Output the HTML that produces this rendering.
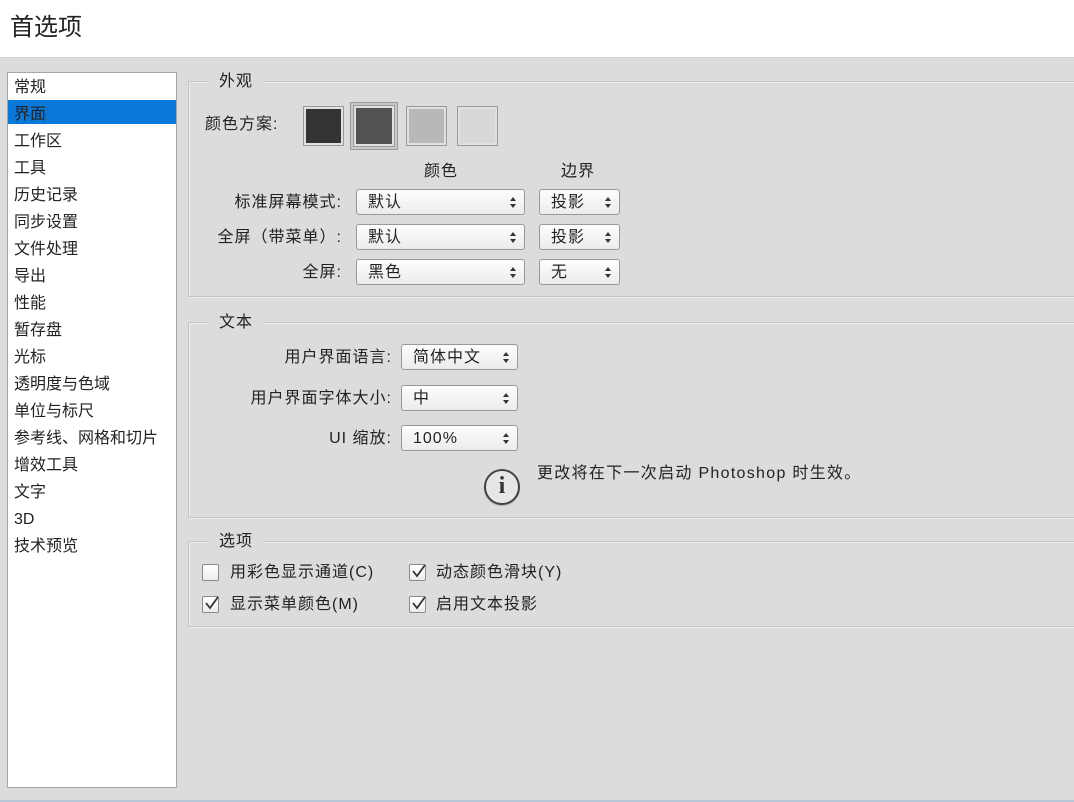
<!DOCTYPE html>
<html><head><meta charset="utf-8"><style>
*{margin:0;padding:0;box-sizing:border-box}
body{width:1074px;height:802px;background:#dcdcdc;position:relative;overflow:hidden;font-family:"Liberation Sans","Noto Sans CJK SC",sans-serif;color:#222}
.a{position:absolute;white-space:nowrap}
#hdr{left:0;top:0;width:1074px;height:58px;background:#fff;border-bottom:1px solid #d0d0d0}
#list{left:7px;top:72px;width:170px;height:716px;background:#fff;border:1px solid #a8a8a8}
.li{position:absolute;left:6px;font-size:16px;line-height:20px;top:1px}
.grp{position:absolute;border:1px solid #c4c4c4;box-shadow:inset 1px 1px 0 #ececec,1px 1px 0 #ececec}
.gt{position:absolute;background:#dcdcdc;padding:0 10px;font-size:16px;line-height:20px}
.sw{position:absolute;border:1px solid #9a9a9a;box-shadow:inset 0 0 0 2px #e0e0e0}
.dd{position:absolute;height:26px;border:1px solid #999;border-radius:3px;background:linear-gradient(#fdfdfd,#ececec);font-size:16px;line-height:26px;padding-left:11px;letter-spacing:1px}
.dd:after{content:"";position:absolute;right:8px;top:7px;width:0;height:0;border-left:3.5px solid transparent;border-right:3.5px solid transparent;border-bottom:4px solid #333}
.dd:before{content:"";position:absolute;right:8px;top:14px;width:0;height:0;border-left:3.5px solid transparent;border-right:3.5px solid transparent;border-top:4px solid #333}
.lb{position:absolute;font-size:16px;line-height:20px;text-align:right;letter-spacing:1px}
.cb{position:absolute;width:17px;height:17px;border:1px solid #8a8a8a;background:linear-gradient(#fff,#ececec);border-radius:2px}
</style></head><body>
<div class="a" id="hdr"></div>
<div class="a" style="left:10px;top:13px;font-size:24px;line-height:30px;color:#222">首选项</div>
<div class="a" id="list">
<div style="position:absolute;left:0;top:27px;width:168px;height:24px;background:#0a78d8"></div>
<div class="li" style="top:5px">常规</div>
<div class="li" style="top:32px">界面</div>
<div class="li" style="top:59px">工作区</div>
<div class="li" style="top:86px">工具</div>
<div class="li" style="top:113px">历史记录</div>
<div class="li" style="top:140px">同步设置</div>
<div class="li" style="top:167px">文件处理</div>
<div class="li" style="top:194px">导出</div>
<div class="li" style="top:221px">性能</div>
<div class="li" style="top:248px">暂存盘</div>
<div class="li" style="top:275px">光标</div>
<div class="li" style="top:302px">透明度与色域</div>
<div class="li" style="top:329px">单位与标尺</div>
<div class="li" style="top:356px">参考线、网格和切片</div>
<div class="li" style="top:383px">增效工具</div>
<div class="li" style="top:410px">文字</div>
<div class="li" style="top:437px">3D</div>
<div class="li" style="top:464px">技术预览</div>
</div>

<div class="grp" style="left:188px;top:81px;width:890px;height:216px"></div>
<div class="gt" style="left:209px;top:72px;letter-spacing:1px">外观</div>
<div class="lb" style="left:205px;top:115px">颜色方案:</div>
<div class="sw" style="left:303px;top:106px;width:41px;height:40px;background:#333"></div>
<div style="position:absolute;left:350px;top:102px;width:48px;height:48px;border:1px solid #999;background:#c8c8c8"></div>
<div class="sw" style="left:353px;top:105px;width:42px;height:42px;background:#535353"></div>
<div class="sw" style="left:406px;top:106px;width:41px;height:40px;background:#b8b8b8"></div>
<div class="sw" style="left:457px;top:106px;width:41px;height:40px;background:#d8d8d8"></div>
<div class="lb" style="left:424px;top:162px">颜色</div>
<div class="lb" style="left:561px;top:162px">边界</div>
<div class="lb" style="left:180px;width:162px;top:193px">标准屏幕模式:</div>
<div class="lb" style="left:180px;width:162px;top:228px">全屏（带菜单）:</div>
<div class="lb" style="left:180px;width:162px;top:263px">全屏:</div>
<div class="dd" style="left:356px;top:189px;width:169px">默认</div>
<div class="dd" style="left:356px;top:224px;width:169px">默认</div>
<div class="dd" style="left:356px;top:259px;width:169px">黑色</div>
<div class="dd" style="left:539px;top:189px;width:81px">投影</div>
<div class="dd" style="left:539px;top:224px;width:81px">投影</div>
<div class="dd" style="left:539px;top:259px;width:81px">无</div>

<div class="grp" style="left:188px;top:322px;width:890px;height:196px"></div>
<div class="gt" style="left:209px;top:313px;letter-spacing:1px">文本</div>
<div class="lb" style="left:200px;width:192px;top:348px">用户界面语言:</div>
<div class="lb" style="left:200px;width:192px;top:389px">用户界面字体大小:</div>
<div class="lb" style="left:200px;width:192px;top:429px">UI 缩放:</div>
<div class="dd" style="left:401px;top:344px;width:117px">简体中文</div>
<div class="dd" style="left:401px;top:385px;width:117px">中</div>
<div class="dd" style="left:401px;top:425px;width:117px">100%</div>
<div style="position:absolute;left:484px;top:469px;width:36px;height:36px;border:2px solid #444;border-radius:50%;background:#e6e6e6;box-shadow:0 1px 1px #aaa"></div>
<div class="a" style="left:484px;top:470px;width:36px;text-align:center;font:bold 24px/32px 'Liberation Serif',serif;color:#333">i</div>
<div class="a" style="left:537px;top:464px;font-size:16px;line-height:20px;letter-spacing:1.3px">更改将在下一次启动 Photoshop 时生效。</div>

<div class="grp" style="left:188px;top:541px;width:890px;height:86px"></div>
<div class="gt" style="left:209px;top:532px;letter-spacing:1px">选项</div>
<div class="cb" style="left:202px;top:564px"></div>
<div class="a" style="left:230px;top:563px;font-size:16px;line-height:20px;letter-spacing:1px">用彩色显示通道(C)</div>
<div class="cb" style="left:409px;top:564px"></div>
<div class="a" style="left:436px;top:563px;font-size:16px;line-height:20px;letter-spacing:1px">动态颜色滑块(Y)</div>
<div class="cb" style="left:202px;top:596px"></div>
<div class="a" style="left:230px;top:595px;font-size:16px;line-height:20px;letter-spacing:1px">显示菜单颜色(M)</div>
<div class="cb" style="left:409px;top:596px"></div>
<div class="a" style="left:436px;top:595px;font-size:16px;line-height:20px;letter-spacing:1px">启用文本投影</div>
<svg style="position:absolute;left:0;top:0" width="1074" height="802">
<g fill="none" stroke="#333" stroke-width="1.8">
<path d="M413 571 l4 5 l8 -11"/>
<path d="M206 603 l4 5 l8 -11"/>
<path d="M413 603 l4 5 l8 -11"/>
</g>
</svg>
<div style="position:absolute;left:0;top:800px;width:1074px;height:2px;background:#b8c8d8"></div>
</body></html>
